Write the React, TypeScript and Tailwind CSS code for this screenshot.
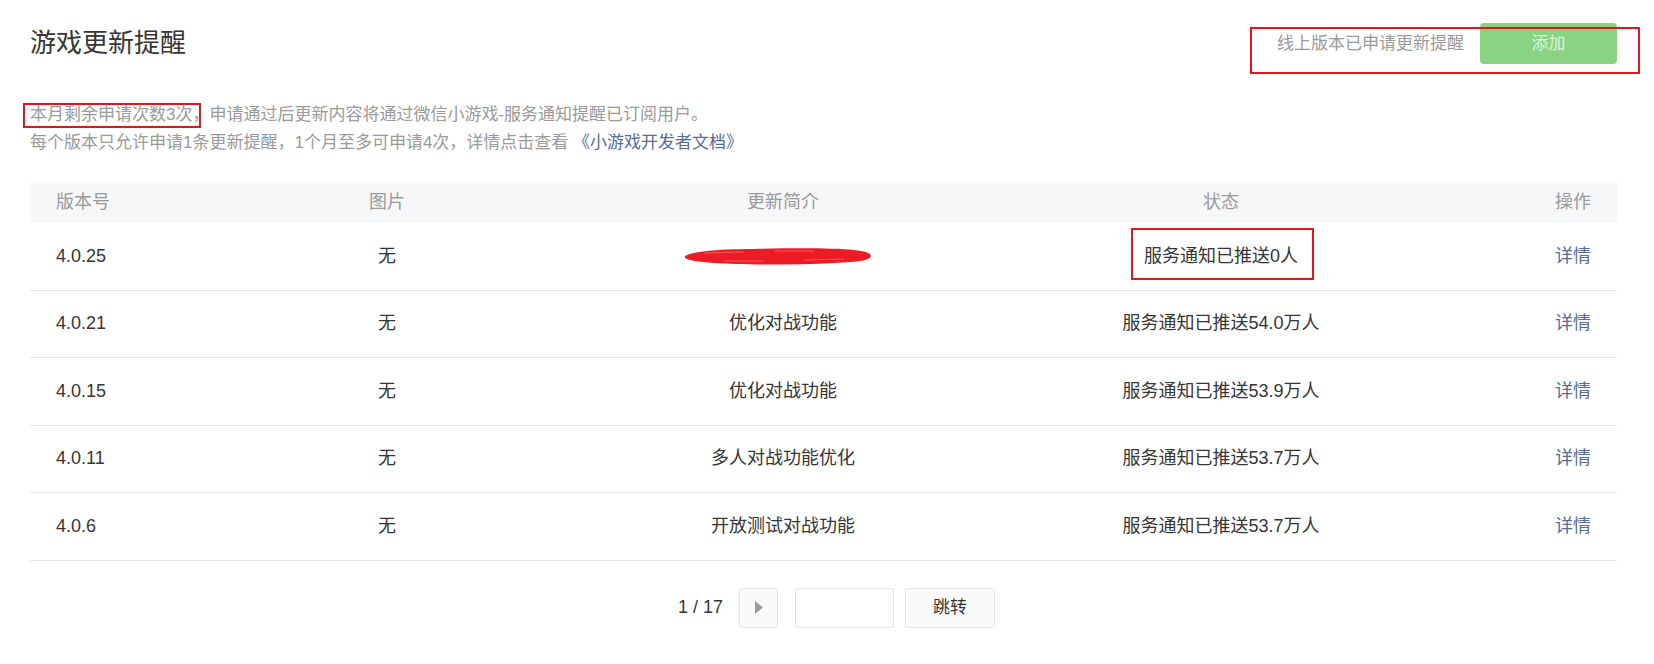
import React from 'react'

const font = { fontFamily: '"Liberation Sans", "Noto Sans CJK SC", sans-serif' }

type Row = {
  version: string
  image: string
  summary: string | null
  status: string
}

const rows: Row[] = [
  { version: '4.0.25', image: '无', summary: null, status: '服务通知已推送0人' },
  { version: '4.0.21', image: '无', summary: '优化对战功能', status: '服务通知已推送54.0万人' },
  { version: '4.0.15', image: '无', summary: '优化对战功能', status: '服务通知已推送53.9万人' },
  { version: '4.0.11', image: '无', summary: '多人对战功能优化', status: '服务通知已推送53.7万人' },
  { version: '4.0.6', image: '无', summary: '开放测试对战功能', status: '服务通知已推送53.7万人' },
]

const cols = 'grid grid-cols-[200px_314px_478px_398px_197px] items-center'

// red brush stroke covering the redacted summary
function Scribble() {
  return (
    <svg width="188" height="19" viewBox="0 0 188 19" className="block">
      <path
        d="M1 9 C8 5 30 2 70 2 C110 1 150 1 170 3 C180 4 187 6 187 9 C186 13 176 15 150 16 C110 18 60 18 30 16 C14 15 4 13 1 11 Z"
        fill="#ed1c24"
      />
      <path d="M20 6 L60 5 M90 4 L130 4 M40 14 L80 14 M120 13 L160 12" stroke="#f46a6f" strokeWidth="0.8" />
    </svg>
  )
}

export default function App() {
  return (
    <div className="relative h-[664px] w-[1654px] overflow-hidden bg-white pl-[30px] pr-[37px]" style={font}>
      {/* header */}
      <div className="flex h-[41px] items-center justify-between mt-[23px]">
        <h1 className="text-[26px] leading-[41px] text-[#353535]">游戏更新提醒</h1>
        <div className="flex items-center gap-[16px]">
          <span className="text-[17px] text-[#9a9a9a]">线上版本已申请更新提醒</span>
          <button
            type="button"
            disabled
            className="h-[41px] w-[137px] rounded-[4px] bg-[#8ad383] text-[17px] text-[#dff3dc]"
          >
            添加
          </button>
        </div>
      </div>

      {/* info */}
      <div className="mt-[37px] text-[17px] leading-[28px] text-[#9a9a9a]">
        <p>本月剩余申请次数3次，申请通过后更新内容将通过微信小游戏-服务通知提醒已订阅用户。</p>
        <p>
          每个版本只允许申请1条更新提醒，1个月至多可申请4次，详情点击查看{' '}
          <a className="text-[#576b95]">《小游戏开发者文档》</a>
        </p>
      </div>

      {/* table */}
      <div className="mt-[25px] text-[18px]">
        <div className={`${cols} h-[41px] bg-[#f6f7f9] text-[#9a9a9a]`}>
          <div className="pl-[26px]">版本号</div>
          <div className="text-center">图片</div>
          <div className="text-center">更新简介</div>
          <div className="text-center">状态</div>
          <div className="pr-[26px] text-right">操作</div>
        </div>
        {rows.map(r => (
          <div key={r.version} className={`${cols} h-[67.5px] border-b border-[#e7e7e7] text-[#353535]`}>
            <div className="pl-[26px]">{r.version}</div>
            <div className="text-center">{r.image}</div>
            <div className="flex justify-center">
              {r.summary ?? (
                <span className="ml-[-10px] mt-[1px]">
                  <Scribble />
                </span>
              )}
            </div>
            <div className="text-center">{r.status}</div>
            <div className="pr-[26px] text-right">
              <a className="text-[#576b95]">详情</a>
            </div>
          </div>
        ))}
      </div>

      {/* pagination */}
      <div className="mt-[27px] flex items-center justify-center pl-[26px]">
        <span className="mr-[16px] text-[18px] text-[#353535]">1 / 17</span>
        <button
          type="button"
          className="mr-[17px] flex h-[40px] w-[39px] items-center justify-center rounded-[3px] border border-[#e5e5e5] bg-[#fafafa]"
        >
          <svg width="8" height="13" viewBox="0 0 8 13">
            <path d="M0 0 L8 6.5 L0 13 Z" fill="#9a9a9a" />
          </svg>
        </button>
        <input className="mr-[11px] h-[40px] w-[99px] rounded-[3px] border border-[#e5e5e5] bg-white outline-none" />
        <button
          type="button"
          className="h-[40px] w-[90px] rounded-[3px] border border-[#e5e5e5] bg-[#fafafa] text-[17px] text-[#353535]"
        >
          跳转
        </button>
      </div>

      {/* red annotation boxes */}
      <div className="pointer-events-none absolute left-[1250px] top-[27px] h-[47px] w-[390px] border-2 border-[#e8141c]" />
      <div className="pointer-events-none absolute left-[23px] top-[103px] h-[25px] w-[178px] border-2 border-[#e8141c]" />
      <div className="pointer-events-none absolute left-[1131px] top-[228px] h-[52px] w-[183px] border-2 border-[#e8141c]" />
    </div>
  )
}
